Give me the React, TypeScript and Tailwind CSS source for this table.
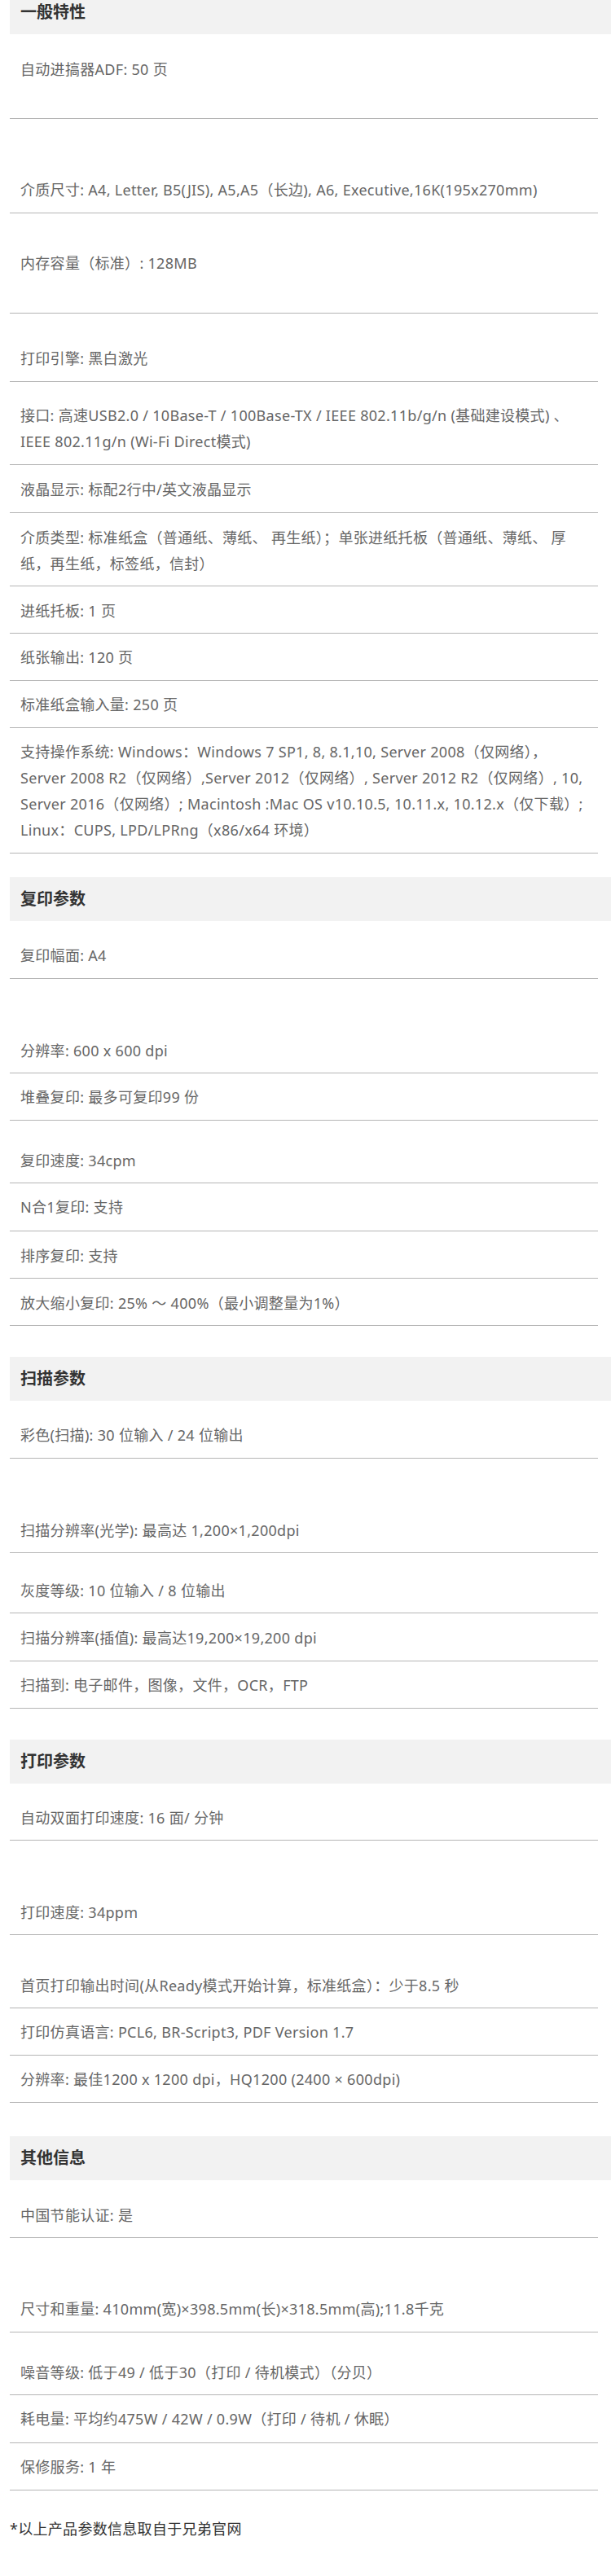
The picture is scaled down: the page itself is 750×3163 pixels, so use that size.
import React from 'react';

interface SpecRow {
  lines: string[];
  box: string;
}

interface SpecSection {
  title: string;
  gap: string;
  rows: SpecRow[];
}

const sections: SpecSection[] = [
  {
    title: '一般特性',
    gap: '-mt-[12px]',
    rows: [
      { lines: ['自动进搞器ADF: 50 页'], box: 'h-[104px] pt-[27px]' },
      { lines: ['介质尺寸: A4, Letter, B5(JIS), A5,A5（长边), A6, Executive,16K(195x270mm)'], box: 'h-[116px] pt-[71px]' },
      { lines: ['内存容量（标准）: 128MB'], box: 'h-[123px] pt-[45px]' },
      { lines: ['打印引擎: 黑白激光'], box: 'h-[84px] pt-[39px]' },
      {
        lines: [
          '接口: 高速USB2.0 / 10Base-T / 100Base-TX / IEEE 802.11b/g/n (基础建设模式) 、',
          'IEEE 802.11g/n (Wi-Fi Direct模式)',
        ],
        box: 'h-[102px] pt-[25px]',
      },
      { lines: ['液晶显示: 标配2行中/英文液晶显示'], box: 'h-[59px] pt-[14px]' },
      {
        lines: ['介质类型: 标准纸盒（普通纸、薄纸、 再生纸）；单张进纸托板（普通纸、薄纸、 厚', '纸，再生纸，标签纸，信封）'],
        box: 'h-[90px] pt-[14px]',
      },
      { lines: ['进纸托板: 1 页'], box: 'h-[58px] pt-[14px]' },
      { lines: ['纸张输出: 120 页'], box: 'h-[58px] pt-[13px]' },
      { lines: ['标准纸盒输入量: 250 页'], box: 'h-[58px] pt-[13px]' },
      {
        lines: [
          '支持操作系统: Windows：Windows 7 SP1, 8, 8.1,10, Server 2008（仅网络），',
          'Server 2008 R2（仅网络）,Server 2012（仅网络）, Server 2012 R2（仅网络）, 10,',
          'Server 2016（仅网络）; Macintosh :Mac OS v10.10.5, 10.11.x, 10.12.x（仅下载）;',
          'Linux：CUPS, LPD/LPRng（x86/x64 环境）',
        ],
        box: 'h-[154px] pt-[13px]',
      },
    ],
  },
  {
    title: '复印参数',
    gap: 'mt-[29px]',
    rows: [
      { lines: ['复印幅面: A4'], box: 'h-[71px] pt-[26px]' },
      { lines: ['分辨率: 600 x 600 dpi'], box: 'h-[116px] pt-[72px]' },
      { lines: ['堆叠复印: 最多可复印99 份'], box: 'h-[58px] pt-[13px]' },
      { lines: ['复印速度: 34cpm'], box: 'h-[77px] pt-[33px]' },
      { lines: ['N合1复印: 支持'], box: 'h-[59px] pt-[13px]' },
      { lines: ['排序复印: 支持'], box: 'h-[58px] pt-[14px]' },
      { lines: ['放大缩小复印: 25% ～ 400%（最小调整量为1%）'], box: 'h-[58px] pt-[14px]' },
    ],
  },
  {
    title: '扫描参数',
    gap: 'mt-[38px]',
    rows: [
      { lines: ['彩色(扫描): 30 位输入 /  24 位输出'], box: 'h-[71px] pt-[26px]' },
      { lines: ['扫描分辨率(光学): 最高达 1,200×1,200dpi'], box: 'h-[116px] pt-[72px]' },
      { lines: ['灰度等级: 10 位输入 /  8 位输出'], box: 'h-[74px] pt-[30px]' },
      { lines: ['扫描分辨率(插值): 最高达19,200×19,200 dpi'], box: 'h-[59px] pt-[14px]' },
      { lines: ['扫描到: 电子邮件，图像，文件，OCR，FTP'], box: 'h-[58px] pt-[13px]' },
    ],
  },
  {
    title: '打印参数',
    gap: 'mt-[38px]',
    rows: [
      { lines: ['自动双面打印速度: 16 面/ 分钟'], box: 'h-[70px] pt-[26px]' },
      { lines: ['打印速度: 34ppm'], box: 'h-[116px] pt-[72px]' },
      { lines: ['首页打印输出时间(从Ready模式开始计算，标准纸盒）：少于8.5 秒'], box: 'h-[90px] pt-[46px]' },
      { lines: ['打印仿真语言: PCL6, BR-Script3, PDF Version 1.7'], box: 'h-[58px] pt-[13px]' },
      { lines: ['分辨率: 最佳1200 x 1200 dpi，HQ1200 (2400 × 600dpi)'], box: 'h-[58px] pt-[13px]' },
    ],
  },
  {
    title: '其他信息',
    gap: 'mt-[41px]',
    rows: [
      { lines: ['中国节能认证: 是'], box: 'h-[71px] pt-[27px]' },
      { lines: ['尺寸和重量: 410mm(宽)×398.5mm(长)×318.5mm(高);11.8千克'], box: 'h-[116px] pt-[71px]' },
      { lines: ['噪音等级: 低于49 / 低于30（打印 / 待机模式）（分贝）'], box: 'h-[77px] pt-[33px]' },
      { lines: ['耗电量: 平均约475W / 42W / 0.9W（打印 / 待机 / 休眠）'], box: 'h-[59px] pt-[13px]' },
      { lines: ['保修服务: 1 年'], box: 'h-[58px] pt-[13px]' },
    ],
  },
];

// latin glyphs from Noto Sans, the rest falls through to the CJK face
const font = { fontFamily: '"Noto Sans", "Noto Sans CJK SC", sans-serif' };

export default function App() {
  return (
    <div className="min-h-[3163px] w-[750px] overflow-hidden bg-white pl-[12px]" style={font}>
      {sections.map((section) => (
        <div key={section.title}>
          <div className={`${section.gap} flex h-[54px] w-[738px] items-center bg-[#f2f2f2] pl-[13px]`}>
            <h2 className="text-[20px] font-bold leading-none text-[#333333]">{section.title}</h2>
          </div>
          {section.rows.map((row, i) => (
            <div
              key={i}
              className={`${row.box} box-border w-[722px] border-b border-[#b5b5b5] pl-[13px] text-[18px] leading-[32px] tracking-[0.3px] text-[#666666]`}
            >
              {row.lines.map((line, j) => (
                <div key={j} className="whitespace-nowrap">
                  {line}
                </div>
              ))}
            </div>
          ))}
        </div>
      ))}
      <p className="mt-[31px] text-[18px] leading-[32px] tracking-[0.3px] text-[#333333]">*以上产品参数信息取自于兄弟官网</p>
    </div>
  );
}
